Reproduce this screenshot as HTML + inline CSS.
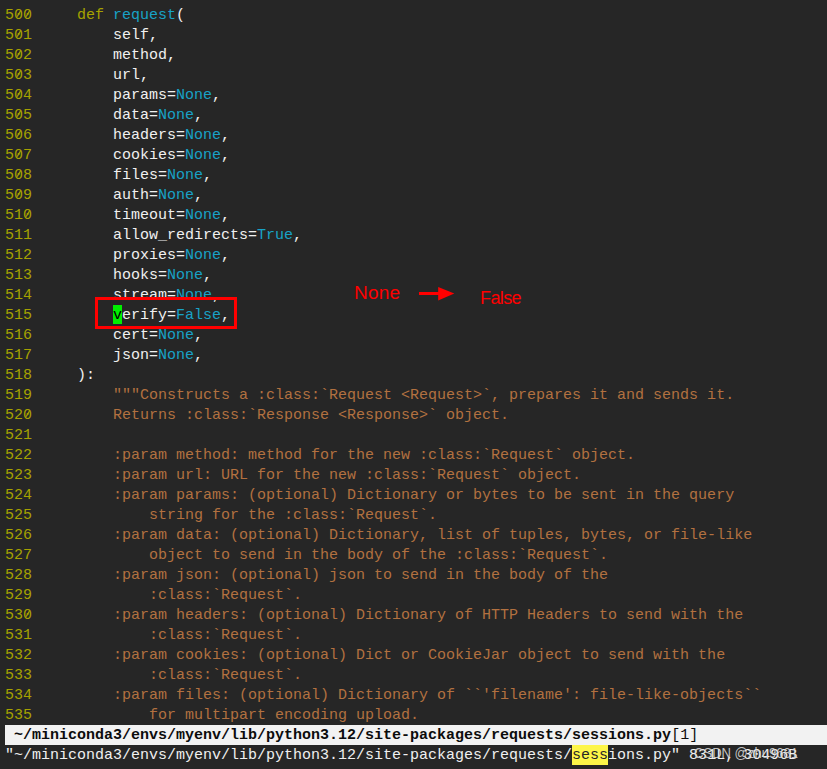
<!DOCTYPE html>
<html><head><meta charset="utf-8"><style>
html,body{margin:0;padding:0;}
body{width:827px;height:769px;background:#262626;position:relative;overflow:hidden;font-family:"Liberation Mono",monospace;font-size:15px;}
.l{position:absolute;left:5px;height:20px;line-height:20px;white-space:pre;color:#f0f0f0;}
.n{color:#a6a200;}
.cur{position:absolute;left:113px;top:305px;width:9px;height:19px;background:#00f000;}
.stbg{position:absolute;left:5px;right:0;top:725px;height:20px;background:#f2f2f2;}
.st{position:absolute;left:5px;top:726px;height:20px;line-height:20px;color:#0c0c0c;white-space:pre;}
.st b{font-weight:bold;}
.cmd{position:absolute;left:5px;top:746px;height:20px;line-height:20px;color:#f0f0f0;white-space:pre;}
.hlbg{position:absolute;left:572px;top:745px;width:36px;height:20px;background:#fdf548;}
.box{position:absolute;left:95px;top:297px;width:136px;height:26px;border:3px solid #ff0000;}
.ann{position:absolute;font-family:"Liberation Sans",sans-serif;color:#ff0000;font-size:18px;line-height:20px;white-space:pre;}
.wm{position:absolute;font-family:"Liberation Sans",sans-serif;color:rgba(215,215,215,0.9);font-size:15px;line-height:20px;white-space:pre;}
</style></head><body>

<div class="cur"></div>
<div class="stbg"></div>
<div class="hlbg"></div>
<div class="l" style="top:6px"><span class="n">500 </span>    <span style="color:#a6a200">def</span> <span style="color:#18a2c6">request</span>(</div>
<div class="l" style="top:26px"><span class="n">501 </span>        self,</div>
<div class="l" style="top:46px"><span class="n">502 </span>        method,</div>
<div class="l" style="top:66px"><span class="n">503 </span>        url,</div>
<div class="l" style="top:86px"><span class="n">504 </span>        params=<span style="color:#18a2c6">None</span>,</div>
<div class="l" style="top:106px"><span class="n">505 </span>        data=<span style="color:#18a2c6">None</span>,</div>
<div class="l" style="top:126px"><span class="n">506 </span>        headers=<span style="color:#18a2c6">None</span>,</div>
<div class="l" style="top:146px"><span class="n">507 </span>        cookies=<span style="color:#18a2c6">None</span>,</div>
<div class="l" style="top:166px"><span class="n">508 </span>        files=<span style="color:#18a2c6">None</span>,</div>
<div class="l" style="top:186px"><span class="n">509 </span>        auth=<span style="color:#18a2c6">None</span>,</div>
<div class="l" style="top:206px"><span class="n">510 </span>        timeout=<span style="color:#18a2c6">None</span>,</div>
<div class="l" style="top:226px"><span class="n">511 </span>        allow_redirects=<span style="color:#18a2c6">True</span>,</div>
<div class="l" style="top:246px"><span class="n">512 </span>        proxies=<span style="color:#18a2c6">None</span>,</div>
<div class="l" style="top:266px"><span class="n">513 </span>        hooks=<span style="color:#18a2c6">None</span>,</div>
<div class="l" style="top:286px"><span class="n">514 </span>        stream=<span style="color:#18a2c6">None</span>,</div>
<div class="l" style="top:306px"><span class="n">515 </span>        <span style="color:#000">v</span>erify=<span style="color:#18a2c6">False</span>,</div>
<div class="l" style="top:326px"><span class="n">516 </span>        cert=<span style="color:#18a2c6">None</span>,</div>
<div class="l" style="top:346px"><span class="n">517 </span>        json=<span style="color:#18a2c6">None</span>,</div>
<div class="l" style="top:366px"><span class="n">518 </span>    ):</div>
<div class="l" style="top:386px"><span class="n">519 </span><span style="color:#b27140">        &quot;&quot;&quot;Constructs a :class:`Request &lt;Request&gt;`, prepares it and sends it.</span></div>
<div class="l" style="top:406px"><span class="n">520 </span><span style="color:#b27140">        Returns :class:`Response &lt;Response&gt;` object.</span></div>
<div class="l" style="top:426px"><span class="n">521 </span><span style="color:#b27140"></span></div>
<div class="l" style="top:446px"><span class="n">522 </span><span style="color:#b27140">        :param method: method for the new :class:`Request` object.</span></div>
<div class="l" style="top:466px"><span class="n">523 </span><span style="color:#b27140">        :param url: URL for the new :class:`Request` object.</span></div>
<div class="l" style="top:486px"><span class="n">524 </span><span style="color:#b27140">        :param params: (optional) Dictionary or bytes to be sent in the query</span></div>
<div class="l" style="top:506px"><span class="n">525 </span><span style="color:#b27140">            string for the :class:`Request`.</span></div>
<div class="l" style="top:526px"><span class="n">526 </span><span style="color:#b27140">        :param data: (optional) Dictionary, list of tuples, bytes, or file-like</span></div>
<div class="l" style="top:546px"><span class="n">527 </span><span style="color:#b27140">            object to send in the body of the :class:`Request`.</span></div>
<div class="l" style="top:566px"><span class="n">528 </span><span style="color:#b27140">        :param json: (optional) json to send in the body of the</span></div>
<div class="l" style="top:586px"><span class="n">529 </span><span style="color:#b27140">            :class:`Request`.</span></div>
<div class="l" style="top:606px"><span class="n">530 </span><span style="color:#b27140">        :param headers: (optional) Dictionary of HTTP Headers to send with the</span></div>
<div class="l" style="top:626px"><span class="n">531 </span><span style="color:#b27140">            :class:`Request`.</span></div>
<div class="l" style="top:646px"><span class="n">532 </span><span style="color:#b27140">        :param cookies: (optional) Dict or CookieJar object to send with the</span></div>
<div class="l" style="top:666px"><span class="n">533 </span><span style="color:#b27140">            :class:`Request`.</span></div>
<div class="l" style="top:686px"><span class="n">534 </span><span style="color:#b27140">        :param files: (optional) Dictionary of ``&#x27;filename&#x27;: file-like-objects``</span></div>
<div class="l" style="top:706px"><span class="n">535 </span><span style="color:#b27140">            for multipart encoding upload.</span></div>
<div class="st"> <b>~/miniconda3/envs/myenv/lib/python3.12/site-packages/requests/sessions.py</b>[1]</div>
<div class="cmd">"~/miniconda3/envs/myenv/lib/python3.12/site-packages/requests/<span style="color:#262626">sess</span>ions.py" 831L, 30496B</div>
<svg style="position:absolute;left:0;top:0" width="827" height="769"><g stroke="#a6a200" stroke-width="1.1"><line x1="17.2" y1="16.6" x2="20.8" y2="10.4"/><line x1="26.2" y1="16.6" x2="29.8" y2="10.4"/><line x1="17.2" y1="36.6" x2="20.8" y2="30.4"/><line x1="17.2" y1="56.6" x2="20.8" y2="50.4"/><line x1="17.2" y1="76.6" x2="20.8" y2="70.4"/><line x1="17.2" y1="96.6" x2="20.8" y2="90.4"/><line x1="17.2" y1="116.6" x2="20.8" y2="110.4"/><line x1="17.2" y1="136.6" x2="20.8" y2="130.4"/><line x1="17.2" y1="156.6" x2="20.8" y2="150.4"/><line x1="17.2" y1="176.6" x2="20.8" y2="170.4"/><line x1="17.2" y1="196.6" x2="20.8" y2="190.4"/><line x1="26.2" y1="216.6" x2="29.8" y2="210.4"/><line x1="26.2" y1="416.6" x2="29.8" y2="410.4"/><line x1="26.2" y1="616.6" x2="29.8" y2="610.4"/></g></svg>
<div class="box"></div>
<div class="ann" style="left:354px;top:283px;font-size:19px;letter-spacing:0.2px">None</div>
<svg style="position:absolute;left:0;top:0" width="827" height="769"><rect x="419" y="292" width="20" height="3" fill="#ff0000"/><polygon points="438.2,287 454.3,293.5 438.2,300.4" fill="#ff0000"/></svg>
<div class="ann" style="left:480px;top:288px;letter-spacing:-0.6px">False</div>
<div class="wm" style="left:694px;top:743px;font-size:14.5px;transform:scaleX(0.9);transform-origin:0 0">CSDN @zhu9681</div>
</body></html>
